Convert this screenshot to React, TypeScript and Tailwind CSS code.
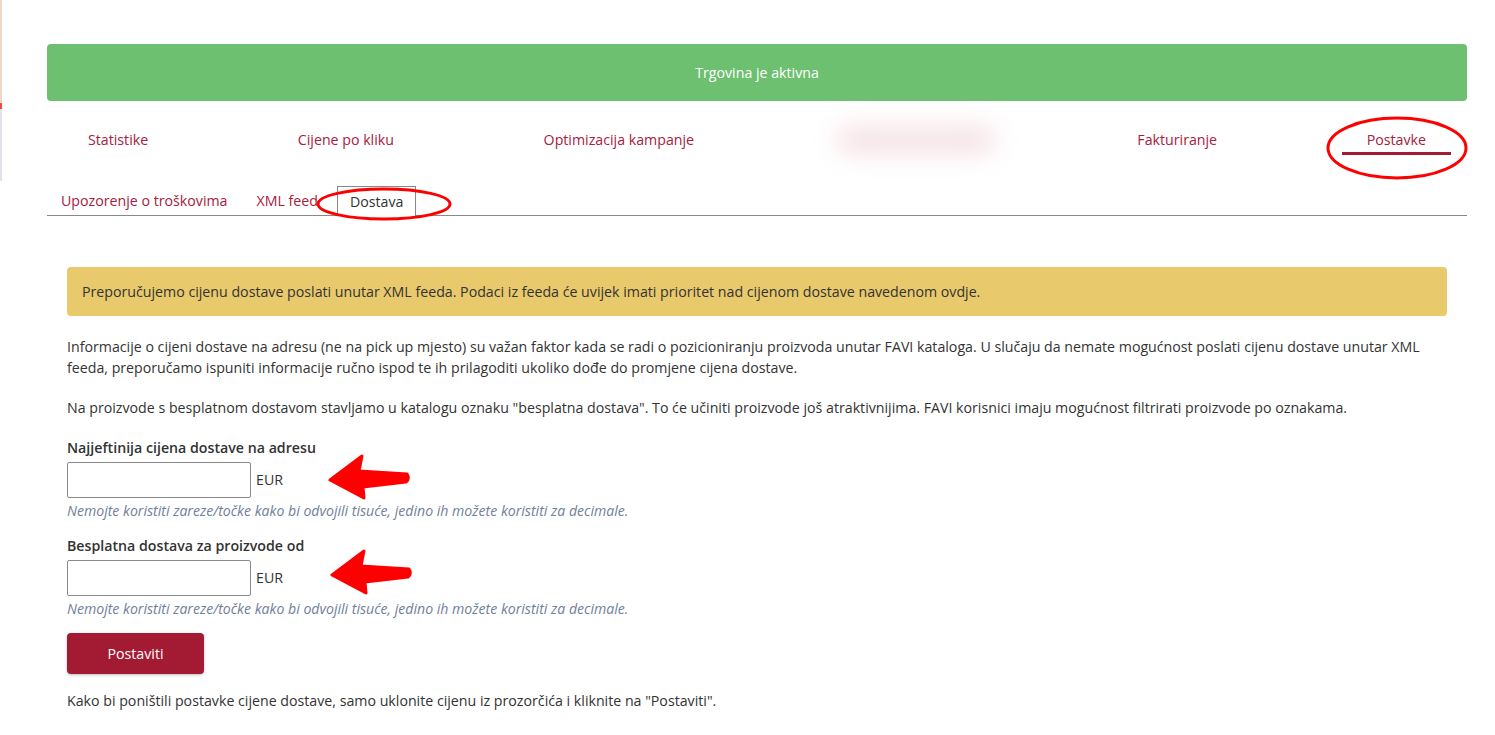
import React from 'react';

const NAV = ['Statistike', 'Cijene po kliku', 'Optimizacija kampanje', '', 'Fakturiranje', 'Postavke'];
const SUBTABS = ['Upozorenje o troškovima', 'XML feed', 'Dostava'];

function Arrow({ className }: { className?: string }) {
  return (
    <svg className={className} width="84" height="48" viewBox="0 0 84 48">
      <path
        d="M3 27 L35 3 L32 18 L80 21 Q83 26 79 29 L36 34 L37 45 Z"
        fill="#ff0000"
        stroke="#ff0000"
        strokeWidth="3"
        strokeLinejoin="round"
      />
    </svg>
  );
}

function PriceField({ label }: { label: string }) {
  return (
    <div>
      <label className="block font-semibold text-[#333] leading-[21px]">{label}</label>
      <div className="mt-[4px] flex items-center">
        <input type="text" className="h-[36px] w-[184px] rounded-[2px] border border-[#8a8a8a] bg-white px-2 outline-none" />
        <span className="ml-[5px] text-[#333]">EUR</span>
      </div>
      <p className="mt-[4px] text-[14.1px] italic leading-[18px] text-[#71809a]">
        Nemojte koristiti zareze/točke kako bi odvojili tisuće, jedino ih možete koristiti za decimale.
      </p>
    </div>
  );
}

export default function App() {
  return (
    <div className="relative min-h-[735px] bg-white text-[14.2px] text-[#333]" style={{ fontFamily: '"Open Sans", "Noto Sans", sans-serif' }}>
      {/* left edge leftover from neighbouring window */}
      <div className="absolute left-0 top-0 flex w-[2px] flex-col">
        <div className="h-[103px] bg-[#eed9c5]" />
        <div className="h-[6px] bg-[#f04a3a]" />
        <div className="h-[72px] bg-[#e0e2ef]" />
      </div>

      <div className="ml-[47px] w-[1420px] pt-[44px]">
        <div className="flex h-[57px] items-center justify-center rounded-[4px] bg-[#6cc070] text-white">
          Trgovina je aktivna
        </div>

        <nav className="relative mt-[18px] flex justify-between px-4">
          {NAV.map((item, i) =>
            item ? (
              <a
                key={i}
                className={`block border-b-[3px] px-[25px] pb-[2px] pt-[10px] leading-[21px] text-[#a8203d] ${
                  item === 'Postavke' ? 'border-[#a31a35]' : 'border-transparent'
                }`}
              >
                {item}
              </a>
            ) : (
              <div key={i} className="flex w-[194px] items-center justify-center pt-[6px]">
                <div className="h-[30px] w-[160px] rounded-full bg-[#f6e4e7] blur-md" />
              </div>
            )
          )}
          <svg className="absolute right-[-3px] top-[-4px]" width="145" height="66" viewBox="0 0 145 66">
            <ellipse cx="72" cy="33" rx="69" ry="30" fill="none" stroke="#ff0000" strokeWidth="3" />
          </svg>
        </nav>

        <div className="relative mt-[31px] flex border-b border-[#888]">
          {SUBTABS.map((t) =>
            t === 'Dostava' ? (
              <span key={t} className="-mb-px ml-[7px] border border-b-0 border-[#888] bg-white px-3 pb-[4px] pt-[4px] leading-[21px] text-[#333]">
                {t}
              </span>
            ) : (
              <a key={t} className={`${t === 'XML feed' ? 'ml-[5px]' : 'ml-[2px]'} px-3 pb-[4px] pt-[4px] leading-[21px] text-[#a8203d]`}>
                {t}
              </a>
            )
          )}
          <svg className="absolute left-[268px] top-[0px]" width="140" height="38" viewBox="0 0 140 38">
            <ellipse cx="69" cy="18" rx="66" ry="15" fill="none" stroke="#ff0000" strokeWidth="3" />
          </svg>
        </div>

        <div className="px-5">
          <div className="mt-[51px] rounded-[4px] bg-[#e8c96c] px-[15px] py-[14px] leading-[21px] text-[#333]">
            Preporučujemo cijenu dostave poslati unutar XML feeda. Podaci iz feeda će uvijek imati prioritet nad cijenom dostave navedenom ovdje.
          </div>

          <p className="mt-[20px] leading-[21px]">
            Informacije o cijeni dostave na adresu (ne na pick up mjesto) su važan faktor kada se radi o pozicioniranju proizvoda unutar FAVI kataloga. U slučaju da nemate mogućnost poslati cijenu dostave unutar XML feeda, preporučamo ispuniti informacije ručno ispod te ih prilagoditi ukoliko dođe do promjene cijena dostave.
          </p>
          <p className="mt-[19px] leading-[21px]">
            Na proizvode s besplatnom dostavom stavljamo u katalogu oznaku "besplatna dostava". To će učiniti proizvode još atraktivnijima. FAVI korisnici imaju mogućnost filtrirati proizvode po oznakama.
          </p>

          <div className="relative mt-[19px]">
            <PriceField label="Najjeftinija cijena dostave na adresu" />
            <Arrow className="absolute left-[260px] top-[16px]" />
          </div>
          <div className="relative mt-[15px]">
            <PriceField label="Besplatna dostava za proizvode od" />
            <Arrow className="absolute left-[262px] top-[13px]" />
          </div>

          <button className="mt-[15px] h-[41px] w-[137px] rounded-[4px] bg-[#a31a33] text-white shadow-[0_1px_3px_rgba(0,0,0,0.25)]">
            Postaviti
          </button>

          <p className="mt-[16px] leading-[21px]">
            Kako bi poništili postavke cijene dostave, samo uklonite cijenu iz prozorčića i kliknite na "Postaviti".
          </p>
        </div>
      </div>
    </div>
  );
}
